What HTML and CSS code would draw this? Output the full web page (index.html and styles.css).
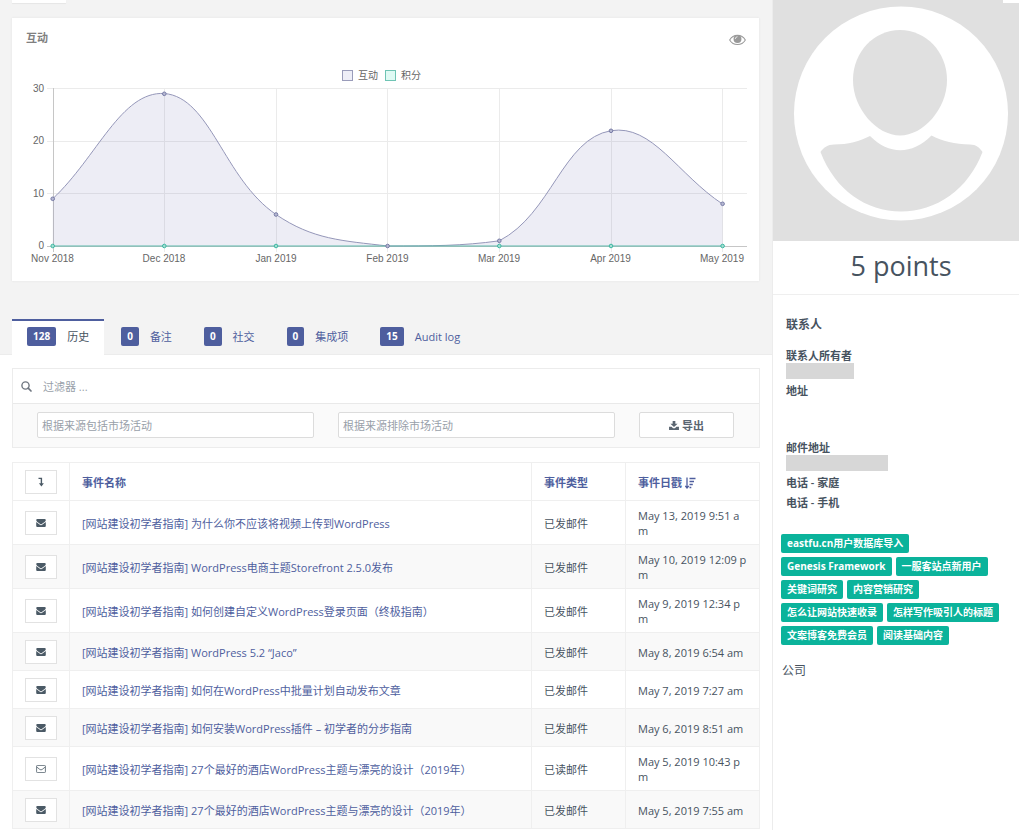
FILE: index.html
```html
<!DOCTYPE html>
<html lang="zh-CN">
<head>
<meta charset="utf-8">
<title>联系人</title>
<link rel="stylesheet" href="styles.css">
</head>
<body>
<svg class="defs" aria-hidden="true">
  <symbol id="mail" viewBox="0 0 12 10"><path d="M1.5 0h9A1.5 1.5 0 0 1 12 1.4c0 .8-.5 1.5-1.100 1.900L7.400 5.800C6.900 6.200 6.500 6.500 6 6.500s-.9-.3-1.400-.7L1.100 3.300C.4 2.800 0 2.100 0 1.400A1.500 1.500 0 0 1 1.500 0zM0 3.900l4.200 3c.6.400 1.200.8 1.800.8s1.200-.4 1.800-.8l4.200-3v4.700A1.400 1.400 0 0 1 10.600 10H1.400A1.400 1.400 0 0 1 0 8.600z"/></symbol>
  <symbol id="mail-open" viewBox="0 0 12 10"><rect x=".5" y=".5" width="11" height="9" rx="1" fill="none" stroke="currentColor"/><path d="M.8 2.600 4.600 5.600Q6 6.700 7.400 5.600L11.200 2.600" fill="none" stroke="currentColor"/></symbol>
</svg>
<div class="page">
  <main class="main">
    <section class="overview">
      <div class="toolbar"><span class="toolbar-tab"></span></div>
      <div class="card">
        <div class="card-head">
          <h2>互动</h2>
          <svg class="eye" viewBox="0 0 18 12"><path d="M.7 6C4.600-.8 13.400-.8 17.300 6 13.400 12.500 4.600 12.500.7 6z" fill="none" stroke="currentColor" stroke-width="1.100"/><circle cx="9" cy="5" r="4.200" fill="currentColor"/><path d="M6.600 5Q6.700 2.700 9 2.500" fill="none" stroke="#fff" stroke-width=".8"/></svg>
        </div>
        <svg class="chart" viewBox="12 61 747 220" role="img" aria-label="互动">
          <g class="legend">
            <rect class="key-a" x="342.500" y="70.500" width="10" height="10"/><text x="358" y="79">互动</text>
            <rect class="key-b" x="385.500" y="70.500" width="10" height="10"/><text x="401" y="79">积分</text>
          </g>
          <path class="grid" d="M47 88.500H747M47 141.500H747M47 193.500H747M164.500 88V252M276.500 88V252M387.500 88V252M499.500 88V252M611.500 88V252M722.500 88V252"/>
          <path class="axis" d="M53.500 88V252M47 246.500H747"/>
          <path class="area" d="M52.700 198.800C97.300 156.900 121.200 91 164.300 93.500 210.500 97.200 223.700 178.900 276 214.500 313 239.700 342.100 240.600 387.600 246 431.400 246 462.100 246 499.300 240.800 551.500 213.900 562.800 138.600 611 130.700 652.100 123.900 678 174.700 722.600 204.100V246H52.700z"/>
          <path class="line-a" d="M52.700 198.800C97.300 156.900 121.200 91 164.300 93.500 210.500 97.200 223.700 178.900 276 214.500 313 239.700 342.100 240.600 387.600 246 431.400 246 462.100 246 499.300 240.800 551.500 213.900 562.800 138.600 611 130.700 652.100 123.900 678 174.700 722.600 204.100"/>
          <path class="line-b" d="M52.700 246H722.600"/>
          <g class="dots-b"><circle cx="52.700" cy="246" r="1.800"/><circle cx="164.300" cy="246" r="1.800"/><circle cx="276" cy="246" r="1.800"/><circle cx="499.300" cy="246" r="1.800"/><circle cx="611" cy="246" r="1.800"/><circle cx="722.600" cy="246" r="1.800"/></g>
          <g class="dots-a"><circle cx="52.700" cy="198.800" r="1.800"/><circle cx="164.300" cy="93.800" r="1.800"/><circle cx="276" cy="214.500" r="1.800"/><circle cx="387.600" cy="246" r="1.800"/><circle cx="499.300" cy="240.800" r="1.800"/><circle cx="611" cy="130.800" r="1.800"/><circle cx="722.600" cy="203.800" r="1.800"/></g>
          <g class="y-labels"><text x="44" y="92">30</text><text x="44" y="144">20</text><text x="44" y="197">10</text><text x="44" y="249">0</text></g>
          <g class="x-labels"><text x="52.500" y="262">Nov 2018</text><text x="164" y="262">Dec 2018</text><text x="276" y="262">Jan 2019</text><text x="387.500" y="262">Feb 2019</text><text x="499" y="262">Mar 2019</text><text x="610.500" y="262">Apr 2019</text><text x="722" y="262">May 2019</text></g>
        </svg>
      </div>
      <nav class="tabs">
        <a class="tab active" href="#history"><b>128</b>历史</a>
        <a class="tab" href="#notes"><b>0</b>备注</a>
        <a class="tab" href="#social"><b>0</b>社交</a>
        <a class="tab" href="#integrations"><b>0</b>集成项</a>
        <a class="tab" href="#audit"><b>15</b>Audit log</a>
      </nav>
    </section>
    <section class="history" id="history">
      <form class="filters">
        <label class="search">
          <svg class="search-icon" viewBox="0 0 11 11"><circle cx="4.500" cy="4.500" r="3.600" fill="none" stroke="currentColor" stroke-width="1.400"/><path d="M7.200 7.200 10 10" stroke="currentColor" stroke-width="1.700" stroke-linecap="round"/></svg>
          <input type="text" placeholder="过滤器 ..." aria-label="过滤器">
        </label>
        <div class="filter-row">
          <input type="text" placeholder="根据来源包括市场活动" aria-label="根据来源包括市场活动">
          <input type="text" placeholder="根据来源排除市场活动" aria-label="根据来源排除市场活动">
          <button type="button" class="export"><svg viewBox="0 0 11 10"><path d="M4 0h3v3h2.500l-4 3.800L1.500 3H4zM0 6.500h2.800l1.700 1.600h2l1.700-1.600H11V10H0z" fill="currentColor"/></svg>导出</button>
        </div>
      </form>
      <table class="events">
        <colgroup><col class="c-icon"><col><col class="c-type"><col class="c-date"></colgroup>
        <thead>
          <tr>
            <th><button type="button" class="icon-btn" aria-label="展开"><svg viewBox="0 0 12 10"><path d="M3.500 1.400H6.400V7" fill="none" stroke="currentColor" stroke-width="1.400"/><path d="M3.900 6.300H8.900L6.400 9.600z" fill="currentColor"/></svg></button></th>
            <th><a href="#name">事件名称</a></th>
            <th><a href="#type">事件类型</a></th>
            <th><a href="#date">事件日戳 <svg class="sort" viewBox="0 0 11 12"><path d="M2 .5V10.500M.2 8.800 2 11 3.800 8.800M4.500 1.500H10.500M4.500 4.500H9M4.500 7.500H7.800M4.500 10.500H6.300" fill="none" stroke="currentColor" stroke-width="1.300"/></svg></a></th>
          </tr>
        </thead>
        <tbody>
          <tr><td><button type="button" class="icon-btn" aria-label="详情"><svg><use href="#mail"/></svg></button></td><td><a href="#e1">[网站建设初学者指南] 为什么你不应该将视频上传到WordPress</a></td><td>已发邮件</td><td>May 13, 2019 9:51 a<br>m</td></tr>
          <tr><td><button type="button" class="icon-btn" aria-label="详情"><svg><use href="#mail"/></svg></button></td><td><a href="#e2">[网站建设初学者指南] WordPress电商主题Storefront 2.5.0发布</a></td><td>已发邮件</td><td>May 10, 2019 12:09 p<br>m</td></tr>
          <tr><td><button type="button" class="icon-btn" aria-label="详情"><svg><use href="#mail"/></svg></button></td><td><a href="#e3">[网站建设初学者指南] 如何创建自定义WordPress登录页面（终极指南）</a></td><td>已发邮件</td><td>May 9, 2019 12:34 p<br>m</td></tr>
          <tr><td><button type="button" class="icon-btn" aria-label="详情"><svg><use href="#mail"/></svg></button></td><td><a href="#e4">[网站建设初学者指南] WordPress 5.2 <span lang="en">“Jaco”</span></a></td><td>已发邮件</td><td>May 8, 2019 6:54 am</td></tr>
          <tr><td><button type="button" class="icon-btn" aria-label="详情"><svg><use href="#mail"/></svg></button></td><td><a href="#e5">[网站建设初学者指南] 如何在WordPress中批量计划自动发布文章</a></td><td>已发邮件</td><td>May 7, 2019 7:27 am</td></tr>
          <tr><td><button type="button" class="icon-btn" aria-label="详情"><svg><use href="#mail"/></svg></button></td><td><a href="#e6">[网站建设初学者指南] 如何安装WordPress插件 – 初学者的分步指南</a></td><td>已发邮件</td><td>May 6, 2019 8:51 am</td></tr>
          <tr><td><button type="button" class="icon-btn" aria-label="详情"><svg><use href="#mail-open"/></svg></button></td><td><a href="#e7">[网站建设初学者指南] 27个最好的酒店WordPress主题与漂亮的设计（2019年）</a></td><td>已读邮件</td><td>May 5, 2019 10:43 p<br>m</td></tr>
          <tr><td><button type="button" class="icon-btn" aria-label="详情"><svg><use href="#mail"/></svg></button></td><td><a href="#e8">[网站建设初学者指南] 27个最好的酒店WordPress主题与漂亮的设计（2019年）</a></td><td>已发邮件</td><td>May 5, 2019 7:55 am</td></tr>
        </tbody>
      </table>
    </section>
  </main>
  <aside class="side">
    <svg class="avatar" viewBox="773 0 246 241" role="img" aria-label="头像">
      <path fill="#e0e0e0" d="M773 0h246v241H773z"/>
      <path fill="#fff" d="M1003 0h16v3h-16z"/>
      <circle cx="901" cy="113.500" r="107" fill="#fff"/>
      <path fill="#e0e0e0" d="M900 30C926 30 947 52 947 80 947 109 923 135.500 900 135.500S853 109 853 80C853 52 874 30 900 30z"/>
      <path fill="#e0e0e0" d="M820.500 152C823 148 828 144.500 834 144.500 848 144.500 860 141 870 136 889 155 912 155 931.500 135.500 942 141 955 144 970 144.500 976 144.500 980 148 982.500 152 968 190 936 211.500 901 211.500S835 190 820.500 152z"/>
    </svg>
    <p class="points">5 points</p>
    <div class="details">
      <h3>联系人</h3>
      <dl>
        <dt>联系人所有者</dt><dd class="mask"></dd>
        <dt>地址</dt><dd class="address"></dd>
        <dt>邮件地址</dt><dd class="mask wide"></dd>
        <dt>电话 - 家庭</dt><dd class="phone"></dd>
        <dt>电话 - 手机</dt>
      </dl>
    </div>
    <div class="tags"><span>eastfu.cn用户数据库导入</span><span>Genesis Framework</span><span>一服客站点新用户</span><span>关键词研究</span><span>内容营销研究</span><span>怎么让网站快速收录</span><span>怎样写作吸引人的标题</span><span>文案博客免费会员</span><span>阅读基础内容</span></div>
    <h4>公司</h4>
  </aside>
</div>
</body>
</html>
```
FILE: styles.css
```css
* { box-sizing: border-box; }
body {
  margin: 0;
  background: #fff;
  color: #47535f;
  font: 11px/15px "Open Sans", "Noto Sans CJK SC", sans-serif;
}
h2, h3, h4, p, dl, dd { margin: 0; }
a { color: #4e5e9e; text-decoration: none; }
input, button { font: inherit; }
.defs { display: none; }
.page { display: flex; padding-right: 5px; }
.main { flex: 1; min-width: 0; }

.overview {
  display: flow-root;
  background: #f3f3f3;
  padding: 0 13px 0 12px;
  border-bottom: 1px solid #ececec;
}
.toolbar { height: 18px; }
.toolbar-tab {
  display: block;
  width: 54px;
  height: 3px;
  background: #fff;
  box-shadow: 0 1px 1px #e6e6e6;
}
.card { background: #fff; box-shadow: 0 0 2px #e2e2e2; }
.card-head {
  display: flex;
  justify-content: space-between;
  align-items: center;
  height: 43px;
  padding: 0 13px 5px 14px;
}
.card-head h2 { font-size: 11px; font-weight: 600; color: #808080; }
.eye { width: 17px; height: 12px; margin-top: 6px; color: #999; }
.chart { display: block; width: 100%; font-family: "Liberation Sans", "Noto Sans CJK SC", sans-serif; font-size: 10px; }
.chart text { fill: #666; }
.key-a { fill: #eeeef7; stroke: #9a9cba; }
.key-b { fill: #dffaf4; stroke: #6fc4b4; }
.grid { stroke: #ebebeb; fill: none; }
.axis { stroke: #c6c6c6; fill: none; }
.area { fill: #4e50a0; fill-opacity: .1; }
.line-a { fill: none; stroke: #9597b9; }
.line-b { fill: none; stroke: #5db9ab; }
.dots-a { fill: #b6b8d2; stroke: #777ba6; }
.dots-b { fill: #a5ded3; stroke: #3fb9a3; }
.y-labels { text-anchor: end; }
.x-labels { text-anchor: middle; }

.tabs { display: flex; gap: 2px; margin-top: 38px; }
.tab {
  display: flex;
  align-items: center;
  gap: 11px;
  height: 35px;
  padding: 0 15px 3px;
  border-top: 2px solid transparent;
}
.tab.active { background: #fff; border-top-color: #4e5e9e; color: #47535f; margin-bottom: -1px; height: 36px; padding-bottom: 4px; }
.tab b {
  padding: 2px 6px;
  border-radius: 2px;
  background: #4e5e9e;
  color: #fff;
  font-size: 10px;
}

.history { padding: 13px 12px 0; }
.filters { border: 1px solid #ececec; }
.search { display: flex; align-items: center; gap: 7px; height: 34px; padding: 0 8px; }
.search-icon { width: 11px; height: 11px; color: #6f7680; }
.search input { flex: 1; border: 0; outline: 0; padding: 0 4px; color: inherit; background: none; }
::placeholder { color: #98a0a9; opacity: 1; }
.filter-row {
  display: grid;
  grid-template-columns: 5fr 5fr 95px;
  gap: 24px;
  padding: 8px 25px 9px 24px;
  background: #fafafa;
  border-top: 1px solid #e9e9e9;
}
.filter-row input, .export {
  min-width: 0;
  height: 26px;
  padding: 0 4px;
  border: 1px solid #dcdcdc;
  border-radius: 2px;
  background: #fff;
}
.export { color: #5a6570; font-weight: 600; }
.export svg { width: 10px; height: 9px; margin-right: 3px; }

.events {
  width: 100%;
  margin-top: 14px;
  border-collapse: collapse;
  table-layout: fixed;
  border: 1px solid #efefef;
}
.c-icon { width: 57px; }
.c-type { width: 94px; }
.c-date { width: 134px; }
.events th, .events td { padding: 7px 0 6px 12px; border: 1px solid #efefef; text-align: left; vertical-align: middle; white-space: nowrap; }
.events th { font-weight: 600; }
.events tbody tr:nth-child(even) { background: #f9f9f9; }
.icon-btn {
  display: flex;
  align-items: center;
  justify-content: center;
  width: 32px;
  height: 24px;
  padding: 0;
  border: 1px solid #e2e2e2;
  background: #fff;
  color: #4b5a66;
}
.icon-btn svg { width: 10px; height: 8px; fill: currentColor; }
.events th .icon-btn svg { width: 12px; height: 10px; }
.sort { width: 11px; height: 12px; vertical-align: -2px; }

.side { width: 247px; border-left: 1px solid #ececec; min-height: 100vh; }
.avatar { display: block; width: 100%; }
.points {
  height: 54px;
  padding-left: 10px;
  border-bottom: 1px solid #efefef;
  text-align: center;
  font-size: 27px;
  line-height: 50px;
}
.details { padding: 20px 12px 0 13px; }
.details h3 { font-size: 12px; line-height: 20px; font-weight: 600; margin-bottom: 13px; }
.details dt { font-weight: 600; }
.mask { width: 68px; height: 16px; margin-bottom: 4px; background: #d7d7d7; }
.mask.wide { width: 102px; }
.address { height: 42px; }
.phone { height: 5px; }
.tags { display: flex; flex-wrap: wrap; gap: 4px; padding: 24px 12px 0 8px; }
.tags span {
  padding: 2px 6px;
  border-radius: 2px;
  background: #0bb39b;
  color: #fff;
  font-size: 10px;
  font-weight: 700;
}
.side h4 { margin-top: 16px; padding-left: 9px; font-size: 12px; line-height: 20px; font-weight: 400; }
```
